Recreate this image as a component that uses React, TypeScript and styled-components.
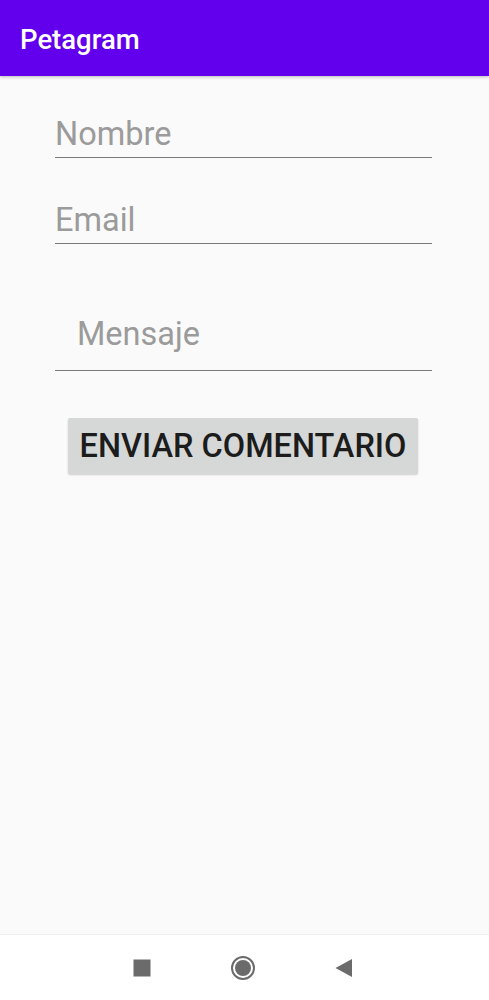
import React from "react";
import styled, { createGlobalStyle } from "styled-components";

const Global = createGlobalStyle`
  html, body { margin: 0; padding: 0; }
  body { font-family: Roboto, "Noto Sans", sans-serif; background: #fafafa; }
  #root { height: 1000px; }
`;

const Screen = styled.div`
  width: 489px;
  height: 1000px;
  display: flex;
  flex-direction: column;
  background: #fafafa;
`;

const AppBar = styled.header`
  height: 76px;
  background: #6200ee;
  display: flex;
  align-items: center;
  padding-left: 20px;
  padding-top: 2px;
  box-sizing: border-box;
  box-shadow: 0 1px 3px rgba(0, 0, 0, 0.25);
  position: relative;
  z-index: 1;
`;

const Title = styled.h1`
  margin: 0;
  font-family: Roboto, sans-serif;
  font-weight: 500;
  font-size: 27.5px;
  color: #ffffff;
  letter-spacing: 0;
`;

const Form = styled.main`
  flex: 1;
  display: flex;
  flex-direction: column;
  padding: 0 57px 0 55px;
`;

const Field = styled.div<{ $top: number; $height: number; $indent?: number; $gap?: number }>`
  margin-top: ${(p) => p.$top}px;
  height: ${(p) => p.$height}px;
  border-bottom: 1.5px solid #7a7a7a;
  display: flex;
  align-items: flex-end;
  padding-left: ${(p) => p.$indent ?? 0}px;
  padding-bottom: ${(p) => p.$gap ?? 7}px;
  box-sizing: border-box;
`;

const Placeholder = styled.span`
  font-family: Roboto, sans-serif;
  font-size: 32.5px;
  color: #9b9b9b;
  line-height: 1;
`;

const Button = styled.button`
  align-self: flex-start;
  margin: 47px 0 0 13px;
  width: 350px;
  height: 56px;
  border: none;
  border-radius: 2px;
  background: #d6d7d7;
  box-shadow: 0 1px 2px rgba(0, 0, 0, 0.18);
  font-family: Roboto, sans-serif;
  font-weight: 500;
  font-size: 32.5px;
  color: #1c1c1c;
  padding: 0;
  display: flex;
  align-items: center;
  justify-content: center;
`;

const NavBar = styled.nav`
  height: 66px;
  background: #ffffff;
  border-top: 1px solid #eeeeee;
  display: flex;
  align-items: center;
  justify-content: center;
  gap: 75px;
  padding-right: 4px;
  box-sizing: border-box;
`;

const NavIcon = styled.svg`
  width: 26px;
  height: 26px;
  display: block;
`;

export default function App() {
  return (
    <>
      <Global />
      <Screen>
        <AppBar>
          <Title>Petagram</Title>
        </AppBar>
        <Form>
          <Field $top={34} $height={48}>
            <Placeholder>Nombre</Placeholder>
          </Field>
          <Field $top={38} $height={48}>
            <Placeholder>Email</Placeholder>
          </Field>
          <Field $top={40} $height={87} $indent={22} $gap={20}>
            <Placeholder>Mensaje</Placeholder>
          </Field>
          <Button>ENVIAR COMENTARIO</Button>
        </Form>
        <NavBar>
          <NavIcon viewBox="0 0 26 26">
            <rect x="4.5" y="4.5" width="17" height="17" fill="#6b6b6b" />
          </NavIcon>
          <NavIcon viewBox="0 0 26 26">
            <circle cx="13" cy="13" r="11" fill="none" stroke="#6b6b6b" strokeWidth="2" />
            <circle cx="13" cy="13" r="8" fill="#6b6b6b" />
          </NavIcon>
          <NavIcon viewBox="0 0 26 26">
            <polygon points="4.5,13 21,4 21,22" fill="#6b6b6b" />
          </NavIcon>
        </NavBar>
      </Screen>
    </>
  );
}
